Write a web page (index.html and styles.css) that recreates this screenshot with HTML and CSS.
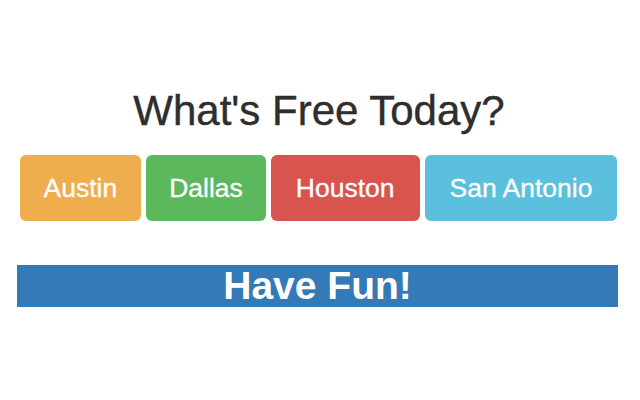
FILE: index.html
```html
<!DOCTYPE html>
<html>
<head>
<meta charset="utf-8">
<title>What's Free Today?</title>
<link rel="stylesheet" href="styles.css">
</head>
<body>
<main class="page">
  <h1 class="title">What's Free Today?</h1>
  <div class="cities">
    <a class="city city-austin" href="#">Austin</a>
    <a class="city city-dallas" href="#">Dallas</a>
    <a class="city city-houston" href="#">Houston</a>
    <a class="city city-sa" href="#">San Antonio</a>
  </div>
  <div class="banner">Have Fun!</div>
</main>
</body>
</html>
```

FILE: styles.css
```css
html, body {
  margin: 0;
  padding: 0;
  background: #ffffff;
}

.page {
  font-family: "Liberation Sans", Arial, Helvetica, sans-serif;
  padding: 88px 22px 0 17px;
  display: flex;
  flex-direction: column;
  align-items: stretch;
}

.title {
  margin: 0;
  font-size: 42px;
  font-weight: normal;
  line-height: 46px;
  color: #2e2e2e;
  text-align: center;
  padding-left: 3px;
  -webkit-text-stroke: 0.4px #2e2e2e;
}

.cities {
  margin-top: 21px;
  display: flex;
  justify-content: center;
  gap: 5px;
  padding-left: 2px;
}

.city {
  display: flex;
  align-items: center;
  padding: 18px 25px;
  font-size: 26.5px;
  line-height: 30px;
  color: #ffffff;
  text-decoration: none;
  border-radius: 6px;
  -webkit-text-stroke: 0.3px #ffffff;
}

.city-austin { background: #f0ad4e; padding-left: 24px; padding-right: 24px; }
.city-dallas { background: #5cb85c; padding-left: 23px; padding-right: 23px; }
.city-houston { background: #d9534f; }
.city-sa { background: #5bc0de; }

.banner {
  margin-top: 44px;
  height: 42px;
  line-height: 42px;
  background: #337ab7;
  color: #ffffff;
  font-size: 39px;
  font-weight: bold;
  text-align: center;
}
```
